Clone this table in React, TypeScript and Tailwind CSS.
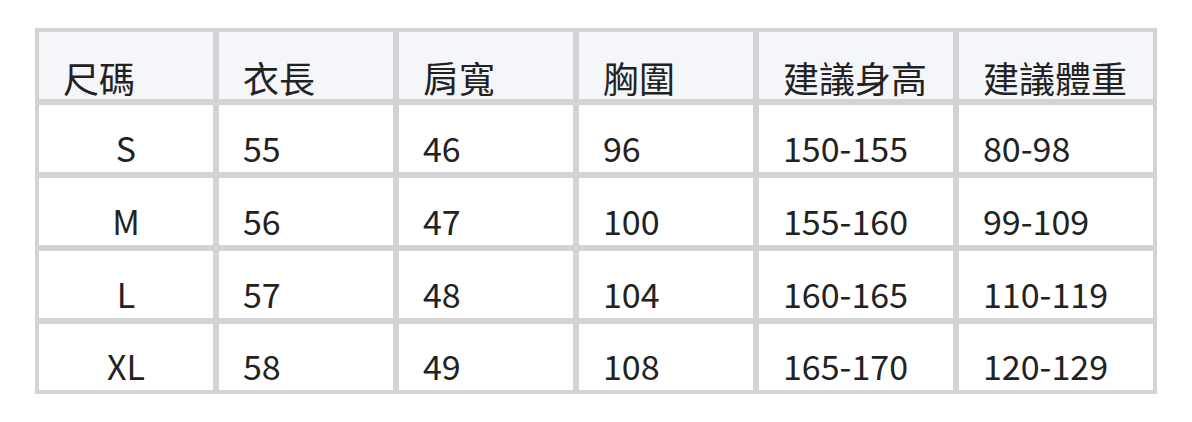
const headers = ["尺碼", "衣長", "肩寬", "胸圍", "建議身高", "建議體重"];

const rows = [
  ["S", "55", "46", "96", "150-155", "80-98"],
  ["M", "56", "47", "100", "155-160", "99-109"],
  ["L", "57", "48", "104", "160-165", "110-119"],
  ["XL", "58", "49", "108", "165-170", "120-129"],
];

export default function App() {
  return (
    <div
      className="w-[1192px] h-[422px] bg-white pt-[28px] pl-[35px] text-[#222]"
      style={{ fontFamily: '"Noto Sans CJK TC", sans-serif' }}
    >
      <div className="w-[1122px] bg-[#d3d3d3] p-[4px] grid grid-cols-[174px_174px_174px_174px_194px_194px] grid-rows-[67px_67px_67px_67px_66px] gap-[6px]">
        {headers.map((h) => (
          <div
            key={h}
            className="bg-[#f5f6fa] flex items-end pl-[24px] pb-[2px] text-[36px] leading-[40px]"
          >
            {h}
          </div>
        ))}
        {rows.map((r) =>
          r.map((c, i) => (
            <div
              key={r[0] + i}
              className={`bg-white flex items-end pb-[4px] text-[34px] leading-[40px] ${
                i === 0 ? "justify-center" : "pl-[24px]"
              }`}
            >
              {c}
            </div>
          ))
        )}
      </div>
    </div>
  );
}
